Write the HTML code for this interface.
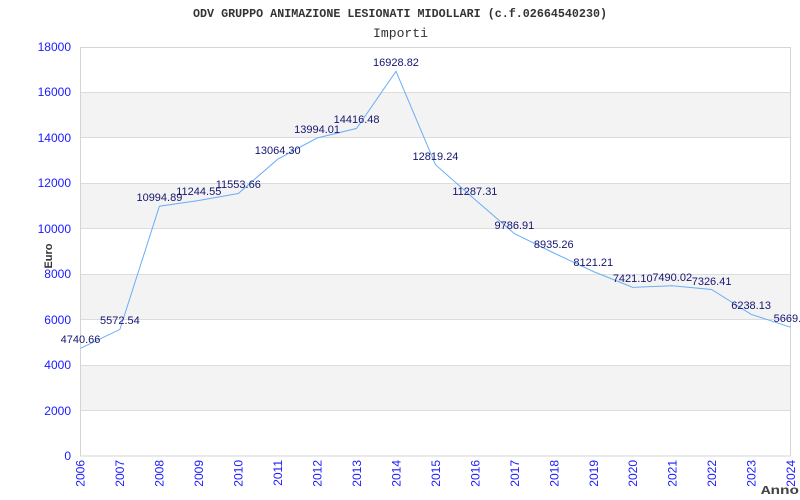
<!DOCTYPE html>
<html><head><meta charset="utf-8"><style>
html,body{margin:0;padding:0;background:#fff;}
svg{display:block;}
</style></head><body>
<svg width="800" height="500" xmlns="http://www.w3.org/2000/svg">
<rect width="800" height="500" fill="#fff"/>
<text x="193" y="17" textLength="414" lengthAdjust="spacingAndGlyphs" font-family="Liberation Mono, monospace" font-weight="bold" font-size="12" fill="#333">ODV GRUPPO ANIMAZIONE LESIONATI MIDOLLARI (c.f.02664540230)</text>
<text x="373" y="37" textLength="55" lengthAdjust="spacingAndGlyphs" font-family="Liberation Mono, monospace" font-size="13" fill="#333">Importi</text>
<g fill="#f3f3f3">
<rect x="80.5" y="92.4" width="710" height="45.4"/>
<rect x="80.5" y="183.3" width="710" height="45.4"/>
<rect x="80.5" y="274.2" width="710" height="45.4"/>
<rect x="80.5" y="365.1" width="710" height="45.4"/>
</g>
<g stroke="#dcdcdc" stroke-width="1">
<line x1="80.5" y1="92.5" x2="790.5" y2="92.5"/>
<line x1="80.5" y1="137.5" x2="790.5" y2="137.5"/>
<line x1="80.5" y1="183.5" x2="790.5" y2="183.5"/>
<line x1="80.5" y1="228.5" x2="790.5" y2="228.5"/>
<line x1="80.5" y1="274.5" x2="790.5" y2="274.5"/>
<line x1="80.5" y1="319.5" x2="790.5" y2="319.5"/>
<line x1="80.5" y1="365.5" x2="790.5" y2="365.5"/>
<line x1="80.5" y1="410.5" x2="790.5" y2="410.5"/>
</g>
<rect x="80.5" y="47.5" width="710" height="408.5" fill="none" stroke="#d4d4d4"/>
<g font-family="Liberation Sans, sans-serif" font-size="12" fill="#1a1aff" text-anchor="end">
<text x="71" y="51">18000</text><text x="71" y="96">16000</text><text x="71" y="142">14000</text>
<text x="71" y="187">12000</text><text x="71" y="233">10000</text><text x="71" y="278">8000</text>
<text x="71" y="324">6000</text><text x="71" y="369">4000</text><text x="71" y="415">2000</text>
<text x="71" y="460">0</text>
</g>
<text transform="translate(52,256) rotate(-90)" text-anchor="middle" font-family="Liberation Sans, sans-serif" font-weight="bold" font-size="11" fill="#333">Euro</text>
<g font-family="Liberation Sans, sans-serif" font-size="12" fill="#1a1aff" text-anchor="end">
<text transform="translate(84.5,460) rotate(-90)">2006</text>
<text transform="translate(124,460) rotate(-90)">2007</text>
<text transform="translate(163.5,460) rotate(-90)">2008</text>
<text transform="translate(203,460) rotate(-90)">2009</text>
<text transform="translate(242.5,460) rotate(-90)">2010</text>
<text transform="translate(282,460) rotate(-90)">2011</text>
<text transform="translate(321.5,460) rotate(-90)">2012</text>
<text transform="translate(361,460) rotate(-90)">2013</text>
<text transform="translate(400.5,460) rotate(-90)">2014</text>
<text transform="translate(440,460) rotate(-90)">2015</text>
<text transform="translate(479.5,460) rotate(-90)">2016</text>
<text transform="translate(519,460) rotate(-90)">2017</text>
<text transform="translate(558.5,460) rotate(-90)">2018</text>
<text transform="translate(598,460) rotate(-90)">2019</text>
<text transform="translate(637,460) rotate(-90)">2020</text>
<text transform="translate(676.5,460) rotate(-90)">2021</text>
<text transform="translate(716,460) rotate(-90)">2022</text>
<text transform="translate(755.5,460) rotate(-90)">2023</text>
<text transform="translate(795,460) rotate(-90)">2024</text>
</g>
<text x="761" y="494" textLength="38" lengthAdjust="spacingAndGlyphs" font-family="Liberation Mono, monospace" font-weight="bold" font-size="12" fill="#444">Anno</text>
<polyline fill="none" stroke="#6aaef5" stroke-width="1" points="80.5,348.3 119.9,329.4 159.4,206.2 198.8,200.5 238.3,193.5 277.7,159.2 317.1,138 356.6,128.4 396,71.3 435.5,164.7 474.9,199.5 514.4,233.6 553.8,253 593.3,271.5 632.7,287.4 672.2,285.8 711.6,289.5 751.1,314.3 790.5,327.2"/>
<g font-family="Liberation Sans, sans-serif" font-size="11" fill="#151570" text-anchor="middle">
<text x="80.5" y="343">4740.66</text>
<text x="119.9" y="324">5572.54</text>
<text x="159.4" y="201">10994.89</text>
<text x="198.8" y="195">11244.55</text>
<text x="238.3" y="188">11553.66</text>
<text x="277.7" y="154">13064.30</text>
<text x="317.1" y="133">13994.01</text>
<text x="356.6" y="123">14416.48</text>
<text x="396" y="66">16928.82</text>
<text x="435.5" y="160">12819.24</text>
<text x="474.9" y="195">11287.31</text>
<text x="514.4" y="229">9786.91</text>
<text x="553.8" y="248">8935.26</text>
<text x="593.3" y="266">8121.21</text>
<text x="632.7" y="282">7421.10</text>
<text x="672.2" y="281">7490.02</text>
<text x="711.6" y="285">7326.41</text>
<text x="751.1" y="309">6238.13</text>
<text x="790.5" y="322">5669.6</text>
</g>
</svg>
</body></html>
